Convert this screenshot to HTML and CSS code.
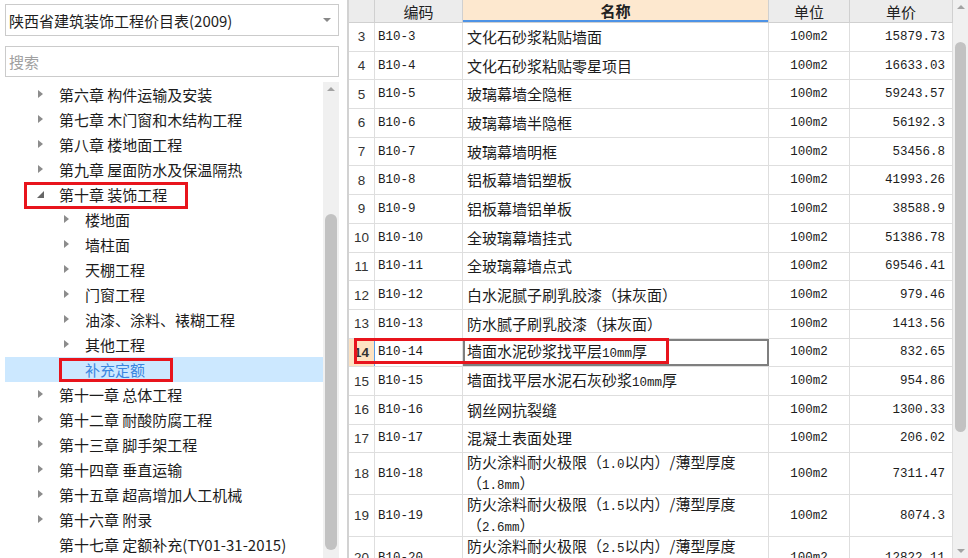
FILE: index.html
```html
<!DOCTYPE html>
<html lang="zh-CN">
<head>
  <meta charset="UTF-8" />
  <title>定额库</title>
  <link rel="stylesheet" href="styles.css">
</head>
<body>
  <div class="app">
    <aside class="side">
      <div class="picker">
        <span>陕西省建筑装饰工程价目表(2009)</span>
        <i class="caret"></i>
      </div>
      <div class="search">搜索</div>
      <div class="tree">
        <ul class="tree-list">
          <li class="node"><i class="arrow"></i>第六章 构件运输及安装</li>
          <li class="node"><i class="arrow"></i>第七章 木门窗和木结构工程</li>
          <li class="node"><i class="arrow"></i>第八章 楼地面工程</li>
          <li class="node"><i class="arrow"></i>第九章 屋面防水及保温隔热</li>
          <li class="node"><i class="arrow open"></i>第十章 装饰工程<span class="mark mark-ch10"></span></li>
          <li class="node sub"><i class="arrow"></i>楼地面</li>
          <li class="node sub"><i class="arrow"></i>墙柱面</li>
          <li class="node sub"><i class="arrow"></i>天棚工程</li>
          <li class="node sub"><i class="arrow"></i>门窗工程</li>
          <li class="node sub"><i class="arrow"></i>油漆、涂料、裱糊工程</li>
          <li class="node sub"><i class="arrow"></i>其他工程</li>
          <li class="node sub selected"><i class="arrow none"></i>补充定额<span class="mark mark-extra"></span></li>
          <li class="node"><i class="arrow"></i>第十一章 总体工程</li>
          <li class="node"><i class="arrow"></i>第十二章 耐酸防腐工程</li>
          <li class="node"><i class="arrow"></i>第十三章 脚手架工程</li>
          <li class="node"><i class="arrow"></i>第十四章 垂直运输</li>
          <li class="node"><i class="arrow"></i>第十五章 超高增加人工机械</li>
          <li class="node"><i class="arrow"></i>第十六章 附录</li>
          <li class="node"><i class="arrow none"></i>第十七章 定额补充(TY01-31-2015)</li>
        </ul>
        <div class="vscroll tree-scroll">
          <i class="up"></i>
          <div class="thumb"></div>
          <i class="down"></i>
        </div>
      </div>
    </aside>

    <section class="grid">
      <div class="sheet">
        <div class="row head">
          <div class="c num"></div>
          <div class="c code">编码</div>
          <div class="c name active">名称</div>
          <div class="c unit">单位</div>
          <div class="c price">单价</div>
        </div>
        <div class="row"><div class="c num">3</div><div class="c code">B10-3</div><div class="c name"><span>文化石砂浆粘贴墙面</span></div><div class="c unit">100m2</div><div class="c price">15879.73</div></div>
        <div class="row"><div class="c num">4</div><div class="c code">B10-4</div><div class="c name"><span>文化石砂浆粘贴零星项目</span></div><div class="c unit">100m2</div><div class="c price">16633.03</div></div>
        <div class="row"><div class="c num">5</div><div class="c code">B10-5</div><div class="c name"><span>玻璃幕墙全隐框</span></div><div class="c unit">100m2</div><div class="c price">59243.57</div></div>
        <div class="row"><div class="c num">6</div><div class="c code">B10-6</div><div class="c name"><span>玻璃幕墙半隐框</span></div><div class="c unit">100m2</div><div class="c price">56192.3</div></div>
        <div class="row"><div class="c num">7</div><div class="c code">B10-7</div><div class="c name"><span>玻璃幕墙明框</span></div><div class="c unit">100m2</div><div class="c price">53456.8</div></div>
        <div class="row"><div class="c num">8</div><div class="c code">B10-8</div><div class="c name"><span>铝板幕墙铝塑板</span></div><div class="c unit">100m2</div><div class="c price">41993.26</div></div>
        <div class="row"><div class="c num">9</div><div class="c code">B10-9</div><div class="c name"><span>铝板幕墙铝单板</span></div><div class="c unit">100m2</div><div class="c price">38588.9</div></div>
        <div class="row"><div class="c num">10</div><div class="c code">B10-10</div><div class="c name"><span>全玻璃幕墙挂式</span></div><div class="c unit">100m2</div><div class="c price">51386.78</div></div>
        <div class="row"><div class="c num">11</div><div class="c code">B10-11</div><div class="c name"><span>全玻璃幕墙点式</span></div><div class="c unit">100m2</div><div class="c price">69546.41</div></div>
        <div class="row"><div class="c num">12</div><div class="c code">B10-12</div><div class="c name"><span>白水泥腻子刷乳胶漆（抹灰面）</span></div><div class="c unit">100m2</div><div class="c price">979.46</div></div>
        <div class="row"><div class="c num">13</div><div class="c code">B10-13</div><div class="c name"><span>防水腻子刷乳胶漆（抹灰面）</span></div><div class="c unit">100m2</div><div class="c price">1413.56</div></div>
        <div class="row current">
          <div class="c num">14</div><div class="c code">B10-14</div><div class="c name"><span>墙面水泥砂浆找平层<b class="lat">10mm</b>厚</span></div><div class="c unit">100m2</div><div class="c price">832.65</div>
          <span class="mark mark-row"></span>
        </div>
        <div class="row"><div class="c num">15</div><div class="c code">B10-15</div><div class="c name"><span>墙面找平层水泥石灰砂浆<b class="lat">10mm</b>厚</span></div><div class="c unit">100m2</div><div class="c price">954.86</div></div>
        <div class="row"><div class="c num">16</div><div class="c code">B10-16</div><div class="c name"><span>钢丝网抗裂缝</span></div><div class="c unit">100m2</div><div class="c price">1300.33</div></div>
        <div class="row"><div class="c num">17</div><div class="c code">B10-17</div><div class="c name"><span>混凝土表面处理</span></div><div class="c unit">100m2</div><div class="c price">206.02</div></div>
        <div class="row tall"><div class="c num">18</div><div class="c code">B10-18</div><div class="c name"><span>防火涂料耐火极限（<b class="lat">1.0</b>以内）/薄型厚度<br>（<b class="lat">1.8mm</b>）</span></div><div class="c unit">100m2</div><div class="c price">7311.47</div></div>
        <div class="row tall"><div class="c num">19</div><div class="c code">B10-19</div><div class="c name"><span>防火涂料耐火极限（<b class="lat">1.5</b>以内）/薄型厚度<br>（<b class="lat">2.6mm</b>）</span></div><div class="c unit">100m2</div><div class="c price">8074.3</div></div>
        <div class="row tall"><div class="c num">20</div><div class="c code">B10-20</div><div class="c name"><span>防火涂料耐火极限（<b class="lat">2.5</b>以内）/薄型厚度<br>（<b class="lat">3.6mm</b>）</span></div><div class="c unit">100m2</div><div class="c price">12822.11</div></div>
      </div>
      <div class="vscroll grid-scroll">
        <i class="up"></i>
        <div class="thumb"></div>
        <i class="down"></i>
      </div>
    </section>
  </div>
</body>
</html>
```
FILE: styles.css
```css
* {
  margin: 0;
  padding: 0;
  box-sizing: border-box;
}
html, body {
  width: 968px;
  height: 558px;
  overflow: hidden;
  background: #ffffff;
}
body {
  font-family: "Noto Sans CJK SC", "Noto Sans", sans-serif;
  color: #1c1c1c;
}
.app {
  display: flex;
  height: 558px;
}

/* left side */
.side {
  width: 347px;
  padding: 4px 8px 0 5px;
  display: flex;
  flex-direction: column;
}
.picker {
  height: 32px;
  border: 1px solid #cbcbcb;
  display: flex;
  align-items: center;
  justify-content: space-between;
  padding: 0 7px 0 3px;
  font-size: 15px;
  color: #1e1e1e;
}
.caret {
  width: 0;
  height: 0;
  border-left: 4px solid transparent;
  border-right: 4px solid transparent;
  border-top: 4px solid #888;
}
.search {
  margin-top: 10px;
  height: 31px;
  border: 1px solid #cbcbcb;
  display: flex;
  align-items: center;
  padding-left: 3px;
  font-size: 15px;
  color: #a0a0a0;
}
.tree {
  margin-top: 5px;
  flex: 1;
  display: flex;
  min-height: 0;
}
.tree-list {
  list-style: none;
  flex: 1;
}
.node {
  position: relative;
  height: 25px;
  display: flex;
  align-items: center;
  padding-left: 54px;
  font-size: 15px;
  white-space: nowrap;
}
.node.sub {
  padding-left: 80px;
}
.arrow {
  position: absolute;
  left: 33px;
  top: 8px;
  width: 0;
  height: 0;
  border-top: 4.5px solid transparent;
  border-bottom: 4.5px solid transparent;
  border-left: 5px solid #8c8c8c;
}
.sub .arrow {
  left: 59px;
}
.arrow.open {
  left: 32px;
  top: 9px;
  border: 0;
}
.arrow.open::before {
  content: "";
  position: absolute;
  left: 0;
  top: 0;
  border-left: 7px solid transparent;
  border-bottom: 7px solid #666;
}
.arrow.none {
  display: none;
}
.node.selected {
  background: #cce8ff;
  color: #3b86e0;
}

/* red marks laid over items */
.mark {
  position: absolute;
  border: 3px solid #e8141c;
  pointer-events: none;
}
.mark-ch10 {
  left: 19px;
  top: -0.5px;
  width: 164px;
  height: 27px;
}
.mark-extra {
  left: 54px;
  top: 0.5px;
  width: 114px;
  height: 24px;
}
.mark-row {
  left: 5px;
  top: -1px;
  width: 315px;
  height: 26px;
}

/* scrollbars */
.vscroll {
  position: relative;
  background: #f0f0f0;
}
.tree-scroll {
  width: 16px;
}
.grid-scroll {
  width: 15px;
}
.vscroll .up,
.vscroll .down {
  position: absolute;
  left: 50%;
  margin-left: -4px;
  width: 0;
  height: 0;
  border-left: 4px solid transparent;
  border-right: 4px solid transparent;
}
.vscroll .up {
  top: 5px;
  border-bottom: 4px solid #a3a3a3;
}
.vscroll .down {
  bottom: 5px;
  border-top: 4px solid #a3a3a3;
}
.tree-scroll .down {
  bottom: -4px;
}
.thumb {
  position: absolute;
  left: 2px;
  right: 2px;
  background: #c2c2c2;
  border-radius: 6px;
}
.tree-scroll .thumb {
  top: 132px;
  height: 336px;
}
.grid-scroll .thumb {
  top: 42px;
  height: 390px;
}

/* grid */
.grid {
  flex: 1;
  display: flex;
  height: 558px;
}
.sheet {
  flex: 1;
  border-left: 2px solid #d2d2d2;
  overflow: hidden;
}
.row {
  position: relative;
  display: flex;
  height: 28.7px;
  border-bottom: 1px solid #dedede;
}
.row.tall {
  height: 42px;
}
.row.head {
  height: 23px;
  border-bottom: 1px solid #d0d0d0;
}
.c {
  flex: none;
  display: flex;
  align-items: center;
  border-right: 1px solid #dedede;
  font-size: 15px;
  white-space: nowrap;
  overflow: hidden;
}
.num {
  width: 26px;
  justify-content: center;
  font-family: "Liberation Sans", sans-serif;
  font-size: 13.5px;
  color: #333;
}
.code {
  width: 88px;
  padding-left: 3px;
  font-family: "Liberation Mono", monospace;
  font-size: 12.5px;
}
.name {
  width: 306px;
  padding-left: 4px;
  line-height: 18px;
  overflow: visible;
}
.unit {
  width: 81px;
  justify-content: center;
  font-family: "Liberation Mono", monospace;
  font-size: 12.5px;
}
.price {
  width: 103px;
  justify-content: flex-end;
  padding-right: 7px;
  font-family: "Liberation Mono", monospace;
  font-size: 12.5px;
}
.lat {
  font-family: "Liberation Mono", monospace;
  font-size: 12.5px;
  font-weight: normal;
}
.head .c {
  background: #ececec;
  justify-content: center;
  padding: 0;
  font-family: "Noto Sans CJK SC", sans-serif;
  font-size: 15px;
  color: #222;
  border-right-color: #d0d0d0;
}
.head .name.active {
  background: #fde8cf;
  font-weight: bold;
  box-shadow: inset 0 -2px 0 #4d93e6;
}
.current .num {
  background: #fde2c2;
  font-weight: bold;
  border-right: 1px solid #5a9de8;
}
.current .name {
  border: 2px solid #7f7f7f;
  padding-left: 2px;
}
```
